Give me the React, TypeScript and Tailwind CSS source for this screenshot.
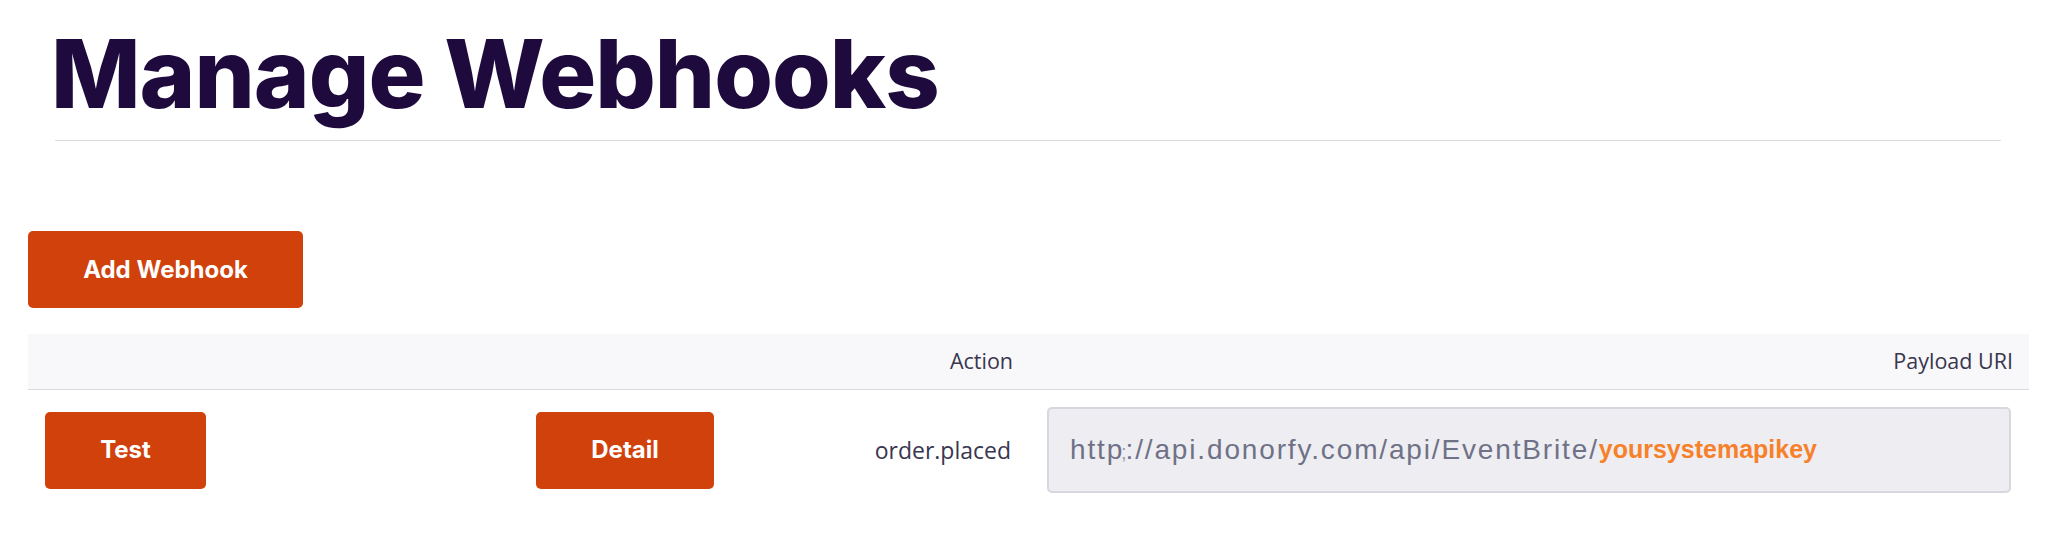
import React from "react";

const cols = "grid grid-cols-[491px_281px_229px_1fr]";

export default function App() {
  return (
    <div className="h-[535px] w-full overflow-hidden bg-white">
      <div className="ml-[55px] mr-[50px] border-b border-[#dcdcdc] pt-[26px] pb-[18px]">
        <h1 className="-ml-[4px] font-['Inter',sans-serif] text-[95px] font-extrabold leading-[96px] tracking-[-1px] text-[#1e0a3c]">
          Manage Webhooks
        </h1>
      </div>

      <div className="pl-[28px] pr-[22px]">
        <div className="pt-[90px]">
          <button className="h-[77px] w-[275px] rounded-[5px] bg-[#d1410c] font-['Inter',sans-serif] text-[24px] font-bold text-white">
            Add Webhook
          </button>
        </div>

        <div className="mt-[26px]">
          <div
            className={`${cols} h-[56px] items-center border-b border-[#dbdae3] bg-[#f8f7fa] font-['Open_Sans',sans-serif] text-[21.5px] text-[#39364f]`}
          >
            <div />
            <div />
            <div className="pr-[16px] text-right">Action</div>
            <div className="pr-[16px] text-right">Payload URI</div>
          </div>

          <div className={`${cols} items-center py-[17px]`}>
            <div className="pl-[17px]">
              <button className="h-[77px] w-[161px] rounded-[5px] bg-[#d1410c] font-['Inter',sans-serif] text-[24px] font-bold text-white">
                Test
              </button>
            </div>
            <div className="pl-[17px]">
              <button className="h-[77px] w-[178px] rounded-[5px] bg-[#d1410c] font-['Inter',sans-serif] text-[24px] font-bold text-white">
                Detail
              </button>
            </div>
            <div className="pr-[18px] text-right font-['Open_Sans',sans-serif] text-[23px] text-[#39364f]">
              order.placed
            </div>
            <div className="pl-[18px] pr-[18px]">
              <div className="flex h-[86px] items-center rounded-[5px] border-2 border-[#d8d7df] bg-[#eeedf2] pl-[21px] font-['Liberation_Sans',sans-serif] text-[28px]">
                <span className="tracking-[1.85px] text-[#6f7287]">
                  http<span className="-mx-[3px] text-[20px] text-[#9d9cab]">;</span>://api.donorfy.com/api/EventBrite/
                </span>
                <span className="text-[25px] font-bold text-[#f6812a]">yoursystemapikey</span>
              </div>
            </div>
          </div>
        </div>
      </div>
    </div>
  );
}
